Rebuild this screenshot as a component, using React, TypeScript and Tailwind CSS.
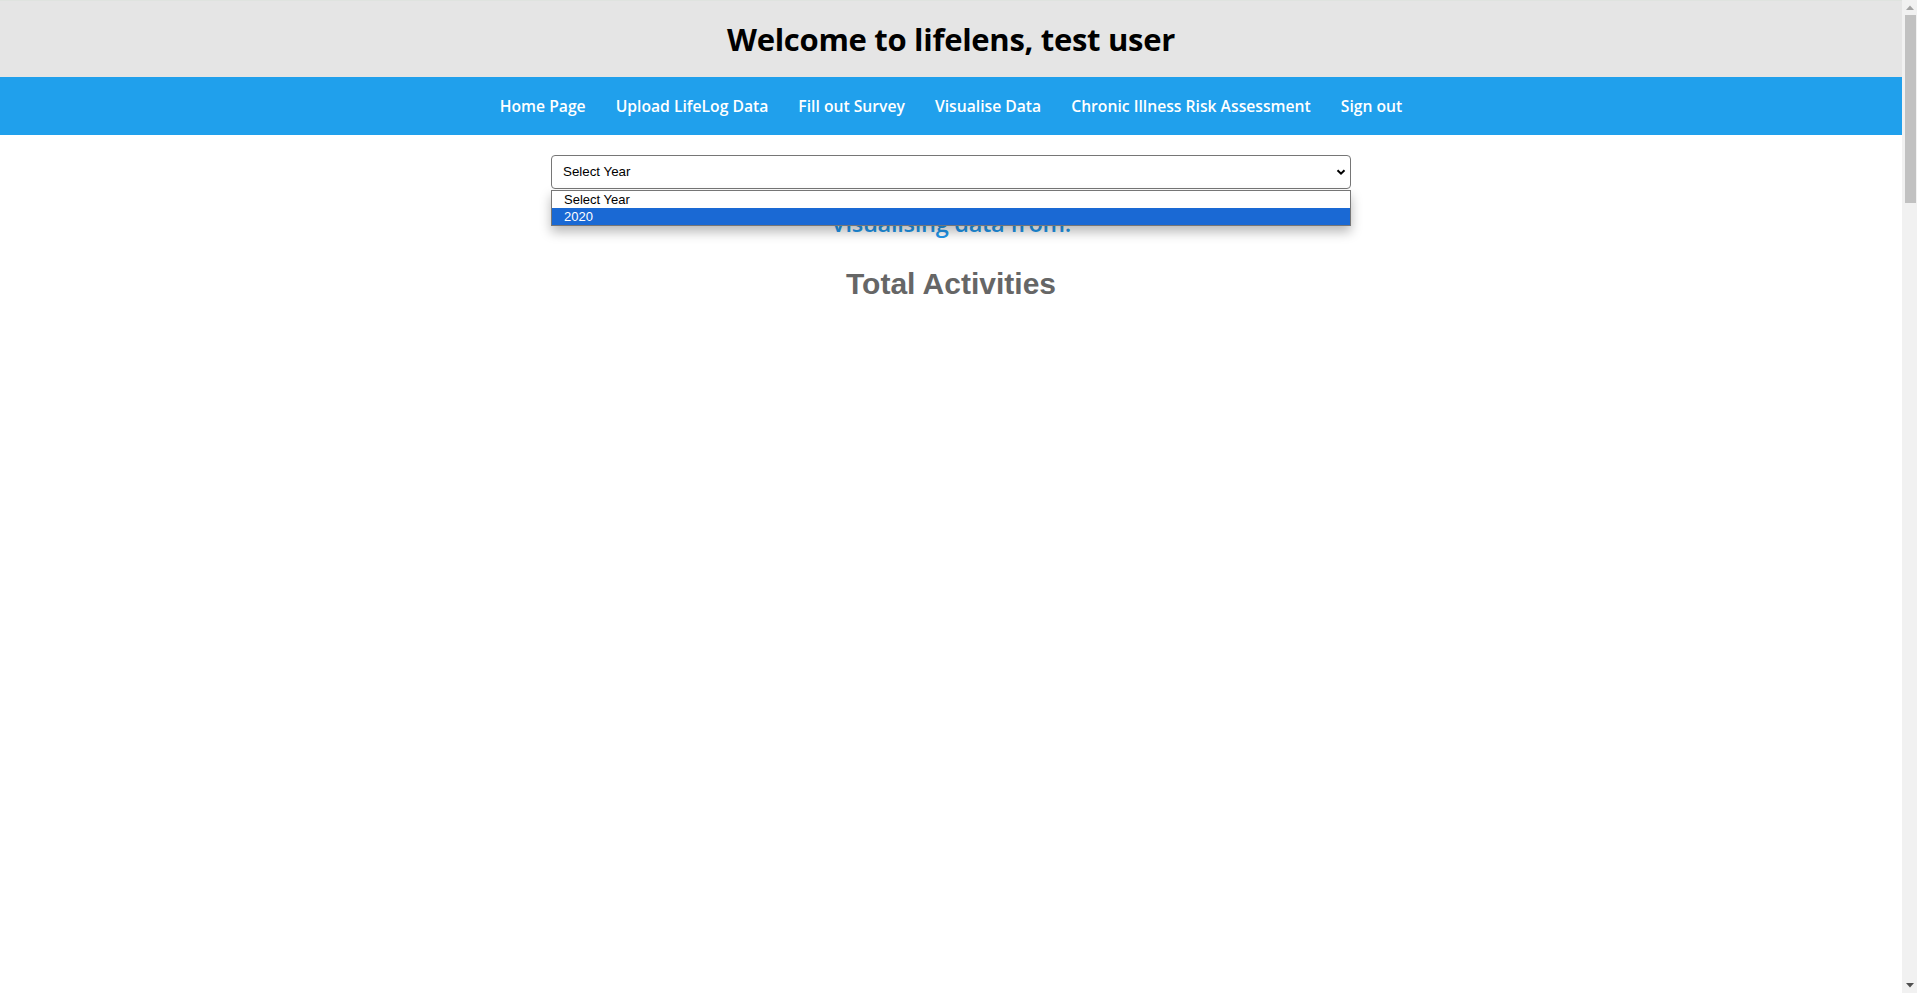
import React from "react";

const navItems = [
  "Home Page",
  "Upload LifeLog Data",
  "Fill out Survey",
  "Visualise Data",
  "Chronic Illness Risk Assessment",
  "Sign out",
];

function Scrollbar() {
  return (
    <div className="w-[15px] shrink-0 bg-[#f1f1f1] flex flex-col items-center">
      <div className="h-[15px] w-full flex items-center justify-center">
        <svg width="8" height="5" viewBox="0 0 8 5">
          <path d="M0 5 L4 0.5 L8 5 Z" fill="#a3a3a3" />
        </svg>
      </div>
      <div className="w-[11px] h-[188px] ml-[1px] bg-[#c1c1c1]" />
      <div className="flex-1" />
      <div className="h-[15px] w-full flex items-center justify-center">
        <svg width="8" height="5" viewBox="0 0 8 5">
          <path d="M0 0 L8 0 L4 4.5 Z" fill="#505050" />
        </svg>
      </div>
    </div>
  );
}

export default function App() {
  return (
    <div className="h-screen flex overflow-hidden bg-white">
      <div className="flex-1 min-w-0 flex flex-col">
        <header className="h-[77px] bg-[#e5e5e5] border-t border-[#dfe3df] flex items-center justify-center">
          <h1 className="text-[31px] font-bold text-black tracking-[-0.3px] font-['Open_Sans',sans-serif] leading-none">
            Welcome to lifelens, test user
          </h1>
        </header>
        <nav className="h-[58px] bg-[#20a0ec] flex items-center justify-center gap-[30px] pt-[1px]">
          {navItems.map((t) => (
            <span
              key={t}
              className="text-white text-[15.7px] font-semibold font-['Open_Sans',sans-serif] leading-none"
            >
              {t}
            </span>
          ))}
        </nav>
        <main className="flex flex-col items-center pt-[20px]">
          <div className="relative w-[800px]">
            <div className="h-[34px] border border-[#767676] rounded-[4px] bg-white flex items-center justify-between pl-[11px] pr-[3px] font-['Liberation_Sans',Arial,sans-serif] text-[13.33px] text-black">
              <span>Select Year</span>
              <svg width="12" height="12" viewBox="0 0 12 12">
                <path d="M2.5 4.2 L6 7.7 L9.5 4.2" fill="none" stroke="#000" strokeWidth="2" />
              </svg>
            </div>
            <div className="absolute z-10 left-0 right-0 top-[35px] border border-[#767676] bg-white shadow-[0_6px_12px_rgba(0,0,0,0.28)] font-['Liberation_Sans',Arial,sans-serif] text-[13px] leading-[17px]">
              <div className="px-[12px] text-black h-[17px]">Select Year</div>
              <div className="px-[12px] text-white bg-[#1a69d4] h-[17px]">2020</div>
            </div>
          </div>
          <p className="mt-[20px] text-[23.6px] font-semibold text-[#2196ea] font-['Open_Sans',sans-serif] leading-[28px] tracking-[-0.3px]">
            Visualising data from:
          </p>
          <h2 className="mt-[30px] text-[30px] font-bold text-[#666666] font-['Liberation_Sans',Arial,sans-serif] leading-[34px]">
            Total Activities
          </h2>
        </main>
      </div>
      <Scrollbar />
    </div>
  );
}
